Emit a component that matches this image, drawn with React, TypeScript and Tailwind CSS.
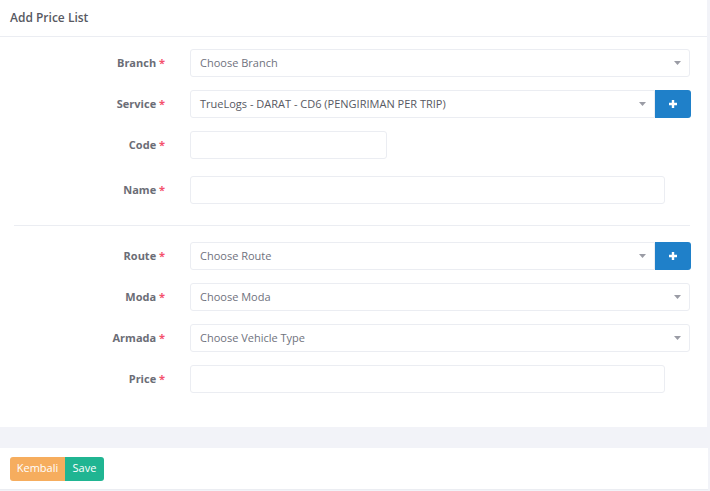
import React from "react";

const Label = ({ text }: { text: string }) => (
  <div className="w-[167px] shrink-0 text-right text-[11px] font-bold text-[#6b6d76] pr-[2px]">
    {text} <span className="text-[#f4516c]">*</span>
  </div>
);

const Caret = () => (
  <svg width="7" height="4" viewBox="0 0 7 4" className="shrink-0">
    <path d="M0 0 L7 0 L3.5 4 Z" fill="#9a9ca5" />
  </svg>
);

const Select = ({ text, dark, w }: { text: string; dark?: boolean; w: string }) => (
  <div className={`${w} h-[28px] border border-[#ebedf2] rounded-[3px] bg-white flex items-center justify-between pl-[9px] pr-[8px]`}>
    <span className={`text-[11px] ${dark ? "text-[#575962]" : "text-[#6f727d]"}`}>{text}</span>
    <Caret />
  </div>
);

const PlusBtn = () => (
  <div className="w-[36px] h-[28px] bg-[#1f80c9] rounded-r-[3px] flex items-center justify-center">
    <svg width="10" height="10" viewBox="0 0 10 10">
      <path d="M5 1 V9 M1 5 H9" stroke="white" strokeWidth="2.4" />
    </svg>
  </div>
);

const Input = ({ w }: { w: string }) => (
  <div className={`${w} h-[28px] border border-[#ebedf2] rounded-[3px] bg-white`} />
);

const Row = ({ label, children, mt }: { label: string; children: React.ReactNode; mt: string }) => (
  <div className={`flex items-center ${mt}`}>
    <Label text={label} />
    <div className="ml-[23px] flex items-center">{children}</div>
  </div>
);

export default function App() {
  return (
    <div className="w-[710px] h-[491px] bg-[#f2f3f8] flex flex-col" style={{ fontFamily: '"Open Sans", sans-serif' }}>
      <div className="w-[707px] h-[427px] bg-white flex flex-col">
        <div className="h-[37px] border-b border-[#ebedf2] flex items-center pl-[10px]">
          <span className="text-[12px] font-semibold text-[#575962]">Add Price List</span>
        </div>
        <div className="flex flex-col">
          <Row label="Branch" mt="mt-[12px]">
            <Select text="Choose Branch" w="w-[500px]" />
          </Row>
          <Row label="Service" mt="mt-[13px]">
            <Select text="TrueLogs - DARAT - CD6 (PENGIRIMAN PER TRIP)" dark w="w-[465px] rounded-r-none" />
            <PlusBtn />
          </Row>
          <Row label="Code" mt="mt-[13px]">
            <Input w="w-[197px]" />
          </Row>
          <Row label="Name" mt="mt-[17px]">
            <Input w="w-[475px]" />
          </Row>
          <div className="ml-[14px] w-[676px] border-t border-[#ebedf2] mt-[21px]" />
          <Row label="Route" mt="mt-[16px]">
            <Select text="Choose Route" w="w-[465px] rounded-r-none" />
            <PlusBtn />
          </Row>
          <Row label="Moda" mt="mt-[13px]">
            <Select text="Choose Moda" w="w-[500px]" />
          </Row>
          <Row label="Armada" mt="mt-[13px]">
            <Select text="Choose Vehicle Type" w="w-[500px]" />
          </Row>
          <Row label="Price" mt="mt-[13px]">
            <Input w="w-[475px]" />
          </Row>
        </div>
      </div>
      <div className="h-[21px]" />
      <div className="w-[708px] h-[42px] bg-white border-b border-[#ebedf2] flex items-center pl-[10px]">
        <div className="flex rounded-[3px] overflow-hidden">
          <div className="h-[24px] w-[55px] bg-[#f6ad5e] text-white text-[11px] flex items-center justify-center">Kembali</div>
          <div className="h-[24px] w-[39px] bg-[#20b592] text-white text-[11px] flex items-center justify-center">Save</div>
        </div>
      </div>
    </div>
  );
}
